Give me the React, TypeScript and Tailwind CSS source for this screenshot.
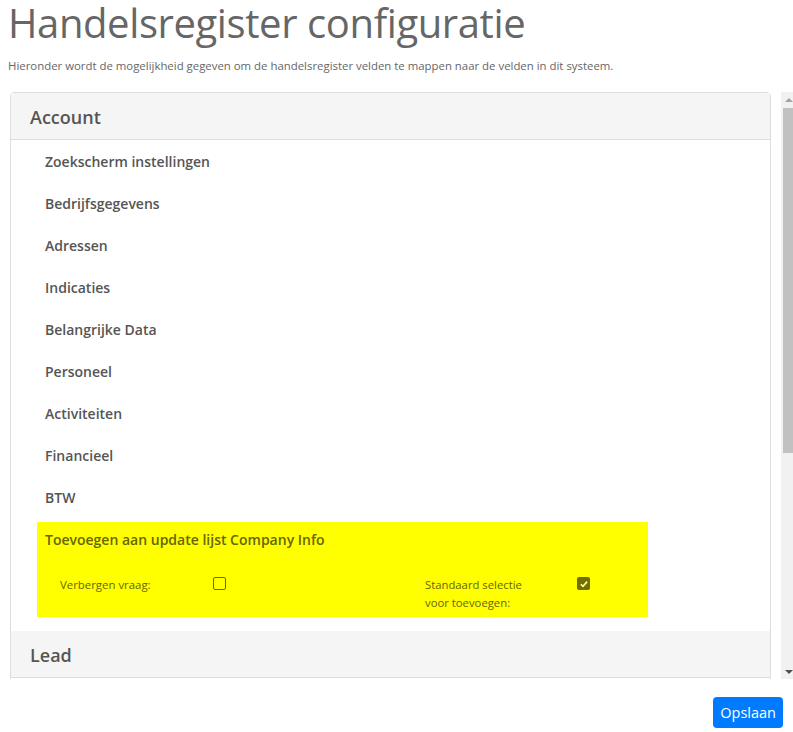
const accountItems = [
  'Zoekscherm instellingen',
  'Bedrijfsgegevens',
  'Adressen',
  'Indicaties',
  'Belangrijke Data',
  'Personeel',
  'Activiteiten',
  'Financieel',
  'BTW',
];

const leadItems = [
  'Zoekscherm instellingen',
  'Bedrijfsgegevens',
  'Adressen',
  'Indicaties',
  'Belangrijke Data',
  'Personeel',
];

const Check = ({ checked }: { checked?: boolean }) =>
  checked ? (
    <span className="flex h-[13px] w-[13px] items-center justify-center rounded-[2px] bg-[#707000]">
      <svg viewBox="0 0 12 12" className="h-[10px] w-[10px]">
        <path d="M2.2 6.3 4.8 8.8 9.8 3.2" fill="none" stroke="#ffffa0" strokeWidth="2" />
      </svg>
    </span>
  ) : (
    <span className="block h-[13px] w-[13px] rounded-[2px] border border-[#6b6b00]" />
  );

const Section = ({ title, items, extra }: { title: string; items: string[]; extra?: boolean }) => (
  <div>
    <div className="flex h-[47px] items-center border-b border-[#dddddd] bg-[#f5f5f5] pl-[19px] pt-[3px] text-[18px] font-semibold text-[#555]">
      {title}
    </div>
    <div>
      {items.map((item) => (
        <div key={item} className="flex h-[42px] items-center pl-[34px] text-[14px] font-semibold text-[#555]">
          {item}
        </div>
      ))}
      {extra && (
        <div className="mx-[26px] mt-[4px] mb-[14px] w-[611px] bg-[#ffff00] px-[8px] pt-[7px] pb-[5px] text-[#666600]">
          <div className="text-[14px] font-semibold">Toevoegen aan update lijst Company Info</div>
          <div className="mt-[26px] flex">
            <div className="w-[168px] pl-[15px] text-[11.4px] leading-[18px]">Verbergen vraag:</div>
            <div className="w-[212px] pt-[1px]">
              <Check />
            </div>
            <div className="w-[152px] text-[11.3px] leading-[18px]">
              Standaard selectie
              <br />
              voor toevoegen:
            </div>
            <div className="pt-[1px]">
              <Check checked />
            </div>
          </div>
        </div>
      )}
    </div>
  </div>
);

// scrollbar naast het paneel
const ScrollBar = () => (
  <div className="flex w-[12px] shrink-0 flex-col bg-[#f1f1f1]">
    <div className="flex h-[15px] items-center pl-[4px]">
      <svg viewBox="0 0 8 4" className="h-[4px] w-[8px]">
        <path d="M0 4 4 0 8 4Z" fill="#a3a3a3" />
      </svg>
    </div>
    <div className="ml-[2px] mt-[1px] h-[345px] bg-[#c1c1c1]" />
    <div className="flex-1" />
    <div className="flex h-[15px] items-center pl-[4px]">
      <svg viewBox="0 0 8 4" className="h-[4px] w-[8px]">
        <path d="M0 0 4 4 8 0Z" fill="#505050" />
      </svg>
    </div>
  </div>
);

const App = () => {
  return (
    <div className="min-h-[732px] overflow-hidden bg-white font-['Open_Sans',sans-serif] text-[#666]">
      <h1 className="pl-[8px] text-[40px] leading-[46px] font-medium tracking-[-0.4px] text-[#666]">
        Handelsregister configuratie
      </h1>
      <p className="mt-[11px] pl-[8px] text-[11.4px] text-[#666]">
        Hieronder wordt de mogelijkheid gegeven om de handelsregister velden te mappen naar de velden in dit systeem.
      </p>

      <div className="mt-[18px] ml-[10px] flex h-[587px] gap-[10px]">
        <div className="h-full w-[761px] overflow-hidden">
          <div className="rounded-t-[4px] border border-[#dddddd]">
            <Section title="Account" items={accountItems} extra />
            <Section title="Lead" items={leadItems} />
          </div>
        </div>
        <ScrollBar />
      </div>

      <div className="flex justify-end pr-[10px] pt-[18px]">
        <button className="h-[31px] rounded-[4px] bg-[#007bff] px-[7px] text-[14.5px] text-white">Opslaan</button>
      </div>
    </div>
  );
};

export default App;
